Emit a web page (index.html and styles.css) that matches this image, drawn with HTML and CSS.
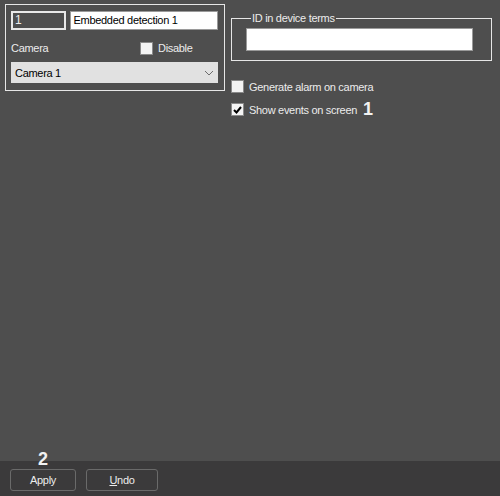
FILE: index.html
```html
<!DOCTYPE html>
<html lang="en">
<head>
    <meta charset="UTF-8">
    <title>Embedded detection</title>
    <link rel="stylesheet" href="styles.css">
</head>
<body>

    <div class="main">
        <!-- Bloc de gauche : numéro, nom, caméra -->
        <div class="group-left">
            <div class="row-top">
                <div class="field-num">1</div>
                <div class="field-name">Embedded detection 1</div>
            </div>
            <div class="row-camera">
                <span class="label">Camera</span>
                <label class="check">
                    <span class="box"></span>
                    <span>Disable</span>
                </label>
            </div>
            <div class="select">
                <span>Camera 1</span>
                <svg width="10" height="6" viewBox="0 0 10 6">
                    <path d="M1 1 L5 5 L9 1" fill="none" stroke="#6d6d6d" stroke-width="1"/>
                </svg>
            </div>
        </div>

        <!-- Colonne de droite -->
        <div class="col-right">
            <fieldset class="group-id">
                <legend>ID in device terms</legend>
                <div class="field-id"></div>
            </fieldset>
            <label class="check option">
                <span class="box"></span>
                <span>Generate alarm on camera</span>
            </label>
            <label class="check option">
                <span class="box checked">
                    <svg width="9" height="8" viewBox="0 0 9 8">
                        <path d="M1 4 L3.5 6.5 L8 1" fill="none" stroke="#000" stroke-width="2"/>
                    </svg>
                </span>
                <span>Show events on screen</span>
                <span class="marker">1</span>
            </label>
        </div>
    </div>

    <div class="footer">
        <div class="btn">
            <span class="marker marker-btn">2</span>
            Apply
        </div>
        <div class="btn btn-undo"><u>U</u>ndo</div>
    </div>

</body>
</html>
```

FILE: styles.css
```css
/* Fond général */
body {
    font-family: "Liberation Sans", Arial, sans-serif;
    font-size: 11px;
    letter-spacing: -0.3px;
    color: #ececec;
    margin: 0;
    padding: 0;
    background: #4e4e4e;
    display: flex;
    flex-direction: column;
    height: 100vh;
}

.main {
    flex: 1;
    display: flex;
    align-items: flex-start;
    padding: 4px 0 0 5px;
    gap: 6px;
}

/* Bloc de gauche */
.group-left {
    width: 207px;
    border: 1px solid #e6e6e6;
    padding: 6px 6px 7px 5px;
}

.row-top {
    display: flex;
    gap: 4px;
}

.field-num {
    width: 49px;
    height: 15px;
    border: 2px solid #e8e8e8;
    line-height: 15px;
    padding-left: 2px;
    font-size: 12px;
}

.field-name {
    width: 145px;
    height: 17px;
    border: 1px solid #9a9a9a;
    background: #fff;
    color: #000;
    line-height: 17px;
    padding-left: 3px;
}

.row-camera {
    display: flex;
    align-items: center;
    height: 14px;
    margin-top: 11px;
}

.row-camera .label {
    width: 129px;
}

.check {
    display: flex;
    align-items: center;
    gap: 5px;
}

.box {
    width: 11px;
    height: 11px;
    border: 1px solid #8a8a8a;
    background: #f4f4f4;
    display: flex;
    align-items: center;
    justify-content: center;
}

.select {
    margin-top: 7px;
    height: 21px;
    background: #e1e1e1;
    color: #000;
    display: flex;
    align-items: center;
    justify-content: space-between;
    padding: 0 4px 0 4px;
}

/* Colonne de droite */
.col-right {
    width: 261px;
}

.group-id {
    margin: 8px 0 0 0;
    padding: 4px 18px 9px 14px;
    border: 1px solid #e6e6e6;
}

.group-id legend {
    padding: 0 1px;
    margin-left: 5px;
    line-height: 12px;
}

.field-id {
    height: 21px;
    border: 1px solid #9a9a9a;
    background: #fff;
}

.option {
    height: 13px;
    margin-top: 19px;
}

.option + .option {
    margin-top: 10px;
}

.marker {
    font-size: 18px;
    font-weight: bold;
    color: #f2f2f2;
    margin-left: 1px;
    line-height: 13px;
    letter-spacing: 0;
}

/* Barre du bas */
.footer {
    height: 35px;
    background: #3b3a3b;
    display: flex;
    align-items: flex-start;
    gap: 10px;
    padding: 8px 0 0 10px;
    box-sizing: border-box;
}

.btn {
    position: relative;
    width: 64px;
    height: 20px;
    border: 1px solid #6a6a6a;
    border-radius: 3px;
    text-align: center;
    line-height: 20px;
}

.btn-undo {
    width: 70px;
}

.marker-btn {
    position: absolute;
    left: 27px;
    top: -17px;
    margin: 0;
}
```
